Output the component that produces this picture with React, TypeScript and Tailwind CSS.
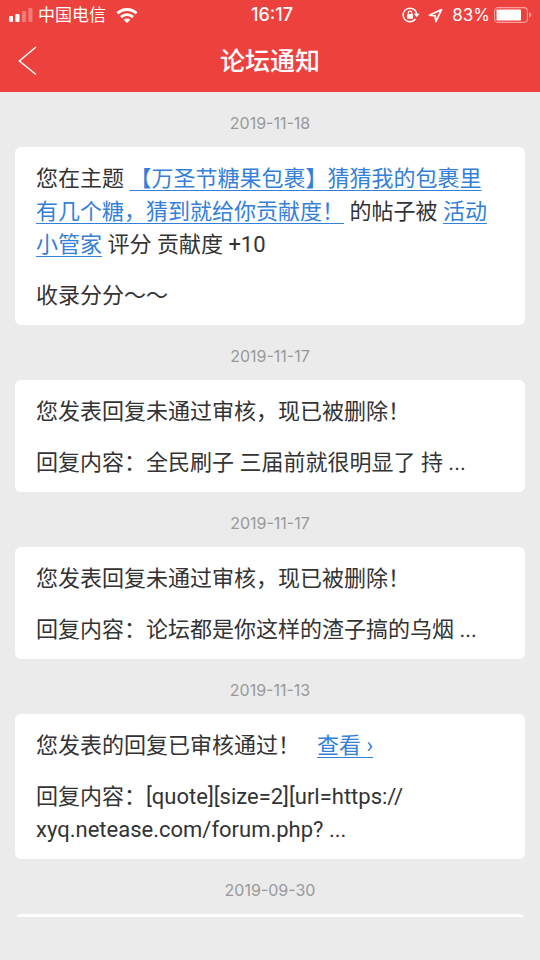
import type { ReactNode } from "react"

export default function App() {
  return (
    <div className="flex flex-col h-screen overflow-hidden bg-[#ebebeb] font-['Inter','Noto_Sans_CJK_SC',sans-serif] text-[#333333]">
      <header className="shrink-0 bg-[#ed413d] text-white">
        <StatusBar />
        <NavBar />
      </header>
      <main className="flex-1 min-h-0 overflow-hidden px-[15px]">
        <NotificationList />
      </main>
      <div className="h-[43px] shrink-0" />
    </div>
  )
}

function StatusBar() {
  return (
    <div className="grid grid-cols-[1fr_auto_1fr] items-center h-[30px] pl-[9px] pr-2">
      <div className="flex items-center gap-[5px]">
        <SignalIcon />
        <span className="text-[17px] leading-6">中国电信</span>
        <WifiIcon />
      </div>
      <span className="pl-[3px] text-[18px] leading-6 font-medium">16:17</span>
      <div className="flex items-center justify-end">
        <RotationLockIcon />
        <LocationIcon />
        <span className="ml-[9px] mr-1 text-[17px] leading-6">83%</span>
        <BatteryIcon />
      </div>
    </div>
  )
}

function NavBar() {
  return (
    <div className="grid grid-cols-[1fr_auto_1fr] items-center h-[62px]">
      <button type="button" aria-label="返回" className="justify-self-start pl-[18px] pr-4">
        <svg width="20" height="30" viewBox="0 0 20 30" fill="none" stroke="currentColor" strokeWidth="1.5">
          <path d="M18 1 1.4 15 18 28.5" />
        </svg>
      </button>
      <h1 className="text-[25px] leading-8 font-medium">论坛通知</h1>
    </div>
  )
}

function NotificationList() {
  const items: { date: string; body: ReactNode }[] = [
    {
      date: "2019-11-18",
      body: (
        <>
          <p>
            您在主题 <TextLink>【万圣节糖果包裹】猜猜我的包裹里有几个糖，猜到就给你贡献度！</TextLink> 的帖子被{" "}
            <TextLink>活动小管家</TextLink> 评分 贡献度 +10
          </p>
          <p>收录分分～～</p>
        </>
      ),
    },
    {
      date: "2019-11-17",
      body: (
        <>
          <p>您发表回复未通过审核，现已被删除！</p>
          <p>回复内容：全民刷子 三届前就很明显了 持 ...</p>
        </>
      ),
    },
    {
      date: "2019-11-17",
      body: (
        <>
          <p>您发表回复未通过审核，现已被删除！</p>
          <p>回复内容：论坛都是你这样的渣子搞的乌烟 ...</p>
        </>
      ),
    },
    {
      date: "2019-11-13",
      body: (
        <>
          <p>
            您发表的回复已审核通过！<span className="ml-[17px]"><TextLink>查看 ›</TextLink></span>
          </p>
          <p>
            回复内容：[quote][size=2][url=https://
            <wbr />
            xyq.netease.com/forum.php? ...
          </p>
        </>
      ),
    },
    { date: "2019-09-30", body: null },
  ]

  return (
    <ul>
      {items.map((item, i) => (
        <li key={i}>
          <time dateTime={item.date} className="block pt-[19px] pb-3 text-center text-[16px] leading-6 text-[#999999]">
            {item.date}
          </time>
          <article className="flex flex-col gap-[18px] min-h-[112px] rounded-md bg-white pl-[21px] pr-[22px] pt-[15px] pb-[13px] font-['Roboto','Noto_Sans_CJK_SC',sans-serif] text-[22px] leading-[33px]">
            {item.body}
          </article>
        </li>
      ))}
    </ul>
  )
}

function TextLink({ children }: { children: ReactNode }) {
  return (
    <a href="#" className="text-[#3480d8] underline decoration-1 underline-offset-4">
      {children}
    </a>
  )
}

function SignalIcon() {
  return (
    <svg width="24" height="14" viewBox="0 0 24 14" fill="currentColor">
      <rect x="0" y="8" width="4" height="6" rx="1" />
      <rect x="6.3" y="6" width="4.2" height="8" rx="1" />
      <rect x="13" y="3" width="4" height="11" rx="1" opacity="0.3" />
      <rect x="19.3" y="0" width="4.2" height="14" rx="1" opacity="0.3" />
    </svg>
  )
}

function WifiIcon() {
  return (
    <svg className="ml-[5px]" width="22" height="15" viewBox="0 0 22 15" fill="none" stroke="currentColor" strokeWidth="2.9">
      <path d="M1.5 5.4a13.6 13.6 0 0 1 19 0" />
      <path d="M5 9.1a8.6 8.6 0 0 1 12 0" />
      <path d="M11 15 7.6 11.8a4.9 4.9 0 0 1 6.8 0Z" fill="currentColor" stroke="none" />
    </svg>
  )
}

function RotationLockIcon() {
  return (
    <svg width="18" height="16" viewBox="0 0 18 16" fill="none" stroke="currentColor" strokeWidth="1.5">
      <path d="M14.7 7.4A6.8 6.8 0 1 0 13.4 12" />
      <path d="M11.8 6.8h5.8l-2.9 3.4Z" fill="currentColor" stroke="none" />
      <rect x="5" y="7" width="6" height="4.8" rx="0.6" fill="currentColor" stroke="none" />
      <path d="M6.3 7.2V5.8a1.7 1.7 0 0 1 3.4 0v1.4" strokeWidth="1.2" />
    </svg>
  )
}

function LocationIcon() {
  return (
    <svg className="ml-2" width="15" height="15" viewBox="0 0 15 15" fill="none" stroke="currentColor" strokeWidth="1.7" strokeLinejoin="round">
      <path d="M13.6 1.4 1.4 7.2l5.8.7.7 5.7Z" />
    </svg>
  )
}

function BatteryIcon() {
  return (
    <svg width="38" height="16" viewBox="0 0 38 16" fill="currentColor">
      <rect x="0.6" y="0.6" width="32.8" height="14.8" rx="3.5" fill="none" stroke="currentColor" strokeWidth="1.1" opacity="0.5" />
      <rect x="2.5" y="2.5" width="24.5" height="11" rx="0.8" />
      <path d="M35 5.3c1.7.6 2.4 1.5 2.4 2.7s-.7 2.1-2.4 2.7Z" opacity="0.5" />
    </svg>
  )
}
